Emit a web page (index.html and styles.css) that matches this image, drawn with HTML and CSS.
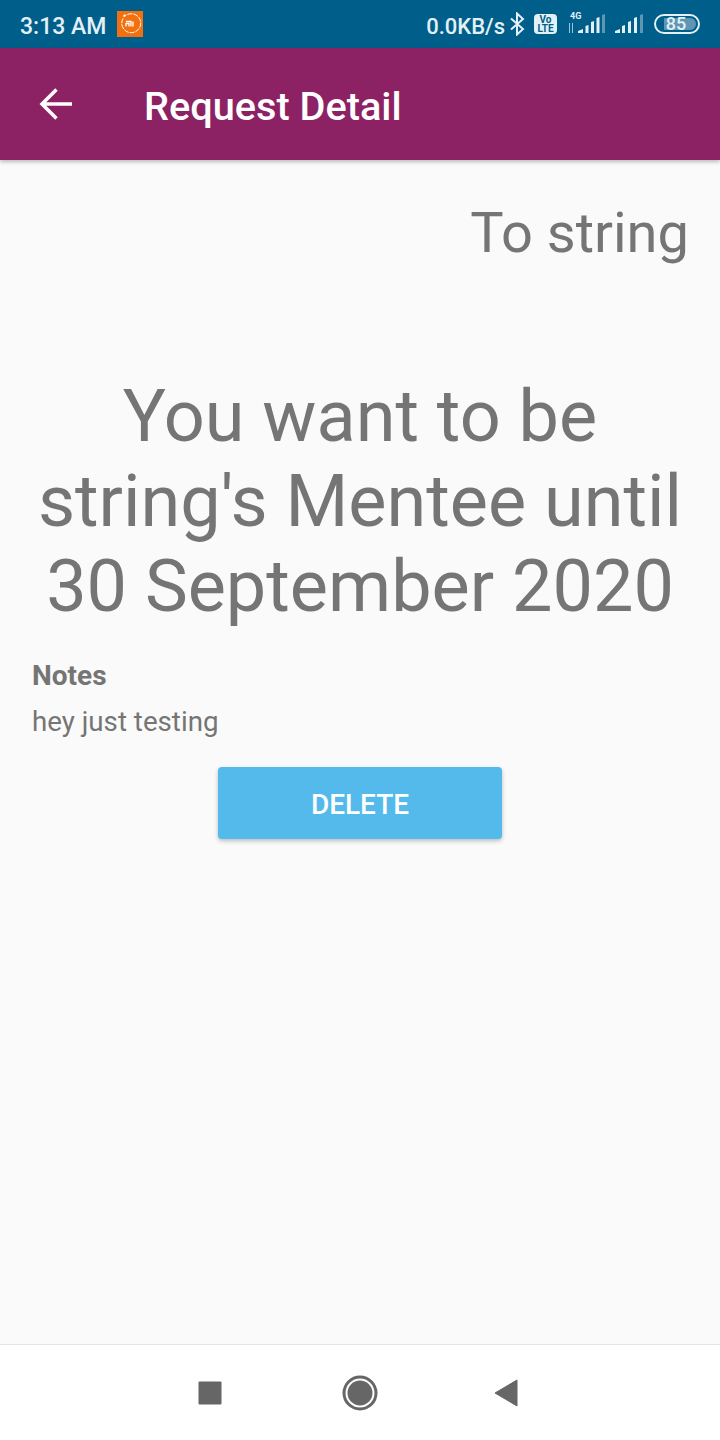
FILE: index.html
```html
<!DOCTYPE html>
<html lang="en">
<head>
  <meta charset="UTF-8">
  <title>Request Detail</title>
  <link rel="stylesheet" href="styles.css">
</head>
<body>
  <div class="phone">
    <div class="status-bar">
      <div class="status-left">
        <span class="time">3:13 AM</span>
        <span class="mi-badge">
          <svg width="26" height="26" viewBox="0 0 26 26">
            <path d="M6 7.500A9.500 9.500 0 1 0 9 4.300" fill="none" stroke="#fff" stroke-width="1" stroke-dasharray="5 1"/>
            <path d="M6.500 5.500l2-1.500" stroke="#fff" stroke-width="2"/>
            <path d="M9 10.500h5v5M9 15.500v-3h3v3M16 10.500v5" fill="none" stroke="#fff" stroke-width="1.300"/>
          </svg>
        </span>
      </div>
      <div class="status-right">
        <span class="speed">0.0KB/s</span>
        <svg class="bt" width="16" height="24" viewBox="0 0 16 24">
          <path d="M2 6.500l12 10.500-6 5.500V1.500L14 7 2 17.500" fill="none" stroke="#e3f0f7" stroke-width="2"/>
        </svg>
        <span class="volte"><span>Vo</span><span>LTE</span></span>
        <span class="signal-wrap">
          <span class="net-label">4G</span>
          <svg width="38" height="20" viewBox="0 0 38 20">
            <path d="M1.500 9v10M4.500 19V9" stroke="#9fc3d6" stroke-width="1"/>
            <path d="M10 19v-2l5-2v4zM17.500 19v-7l3-1v8zM23 19V8l3-1v12zM28.500 19V4l3-1v16z" fill="#e3f0f7"/>
            <path d="M34 19V1l3-1v19z" fill="#5f96b3"/>
          </svg>
        </span>
        <svg class="signal" width="28" height="20" viewBox="0 0 28 20">
          <path d="M0 19v-2l5-2v4zM7 19v-7l3-1v8zM13 19V8l3-1v12zM19 19V4l3-1v16z" fill="#e3f0f7"/>
          <path d="M25 19V1l3-1v19z" fill="#5f96b3"/>
        </svg>
        <span class="battery"><span class="battery-fill"></span><span class="battery-num">85</span></span>
      </div>
    </div>

    <header class="app-bar">
      <svg class="back" width="36" height="36" viewBox="0 0 36 36">
        <path d="M4 18h30M18.500 3.500L4 18l14.500 14.500" fill="none" stroke="#fff" stroke-width="3.500"/>
      </svg>
      <h1 class="title">Request Detail</h1>
    </header>

    <main class="content">
      <div class="to-line">To string</div>
      <div class="headline">You want to be string's Mentee until 30 September 2020</div>
      <div class="notes-label">Notes</div>
      <div class="notes-text">hey just testing</div>
      <div class="actions">
        <button class="delete-btn">DELETE</button>
      </div>
    </main>

    <nav class="nav-bar">
      <svg width="24" height="24" viewBox="0 0 24 24"><rect x="0.500" y="0.500" width="23" height="23" rx="1" fill="#666"/></svg>
      <svg width="36" height="36" viewBox="0 0 36 36">
        <circle cx="18" cy="18" r="16" fill="none" stroke="#666" stroke-width="3"/>
        <circle cx="18" cy="18" r="12.500" fill="#666"/>
      </svg>
      <svg class="nav-back" width="24" height="28" viewBox="0 0 24 28"><path d="M23 1v26l-22-13z" fill="#666" stroke="#666" stroke-linejoin="round"/></svg>
    </nav>
  </div>
</body>
</html>
```

FILE: styles.css
```css
html, body {
  margin: 0;
  padding: 0;
}
body {
  font-family: Roboto, sans-serif;
  background: #fafafa;
}
.phone {
  width: 720px;
  height: 1440px;
  display: flex;
  flex-direction: column;
  overflow: hidden;
}
.status-bar {
  height: 48px;
  background: #005e8a;
  color: #e3f0f7;
  display: flex;
  justify-content: space-between;
  align-items: center;
  padding: 0 20px;
  flex: none;
}
.status-left, .status-right {
  display: flex;
  align-items: center;
}
.time {
  font-size: 23px;
  font-weight: 500;
  padding-top: 4px;
}
.speed {
  font-size: 22px;
  font-weight: 500;
  padding-top: 4px;
}
.mi-badge {
  width: 26px;
  height: 26px;
  margin-left: 11px;
  background: #f4700f;
  display: flex;
}
.bt {
  margin-left: 4px;
}
.volte {
  width: 23px;
  height: 20px;
  margin-left: 9px;
  background: #e3f0f7;
  border-radius: 4px;
  color: #005e8a;
  font-size: 10px;
  font-weight: 700;
  line-height: 9px;
  display: flex;
  flex-direction: column;
  align-items: center;
  justify-content: center;
}
.signal-wrap {
  position: relative;
  margin-left: 11px;
  display: flex;
}
.net-label {
  position: absolute;
  left: 2px;
  top: -3px;
  font-size: 9px;
  line-height: 10px;
  font-weight: 700;
}
.signal {
  margin-left: 9px;
}
.battery {
  position: relative;
  box-sizing: border-box;
  width: 46px;
  height: 20px;
  margin-left: 11px;
  border: 2px solid #e3f0f7;
  border-radius: 10px;
  display: flex;
  align-items: center;
  justify-content: center;
}
.battery-fill {
  position: absolute;
  left: 8px;
  top: 2px;
  bottom: 2px;
  right: 2px;
  background: #5f96b3;
  border-radius: 1px 6px 6px 1px;
}
.battery-num {
  position: relative;
  left: -1px;
  font-size: 18px;
  line-height: 16px;
  font-weight: 500;
}
.app-bar {
  height: 112px;
  background: #8c2263;
  display: flex;
  align-items: center;
  padding: 0 0 0 38px;
  flex: none;
  box-shadow: 0 2px 4px rgba(0, 0, 0, 0.25);
}
.title {
  margin: 0 0 0 70px;
  padding-top: 4px;
  color: #fff;
  font-size: 39.7px;
  font-weight: 500;
}
.content {
  flex: 1;
  color: #757575;
  padding: 0 32px;
}
.to-line {
  margin: 40px -1px 0 0;
  font-size: 56px;
  line-height: 66px;
  text-align: right;
}
.headline {
  margin: 108px -4px 0;
  font-size: 72px;
  line-height: 85px;
  text-align: center;
}
.notes-label {
  margin-top: 27px;
  font-size: 28px;
  line-height: 40px;
  font-weight: 700;
}
.notes-text {
  margin-top: 6px;
  font-size: 27.7px;
  line-height: 40px;
}
.actions {
  display: flex;
  justify-content: center;
  margin-top: 25px;
}
.delete-btn {
  width: 284px;
  height: 72px;
  padding-top: 4px;
  background: #53baeb;
  border: none;
  border-radius: 4px;
  color: #fff;
  font-family: Roboto, sans-serif;
  font-size: 28px;
  font-weight: 500;
  box-shadow: 0 2px 4px rgba(0, 0, 0, 0.25);
}
.nav-bar {
  height: 95px;
  padding-right: 4px;
  background: #fff;
  border-top: 1px solid #e4e4e4;
  display: flex;
  justify-content: center;
  align-items: center;
  gap: 120px;
  flex: none;
}
.nav-back {
  margin-left: -4px;
}
```
